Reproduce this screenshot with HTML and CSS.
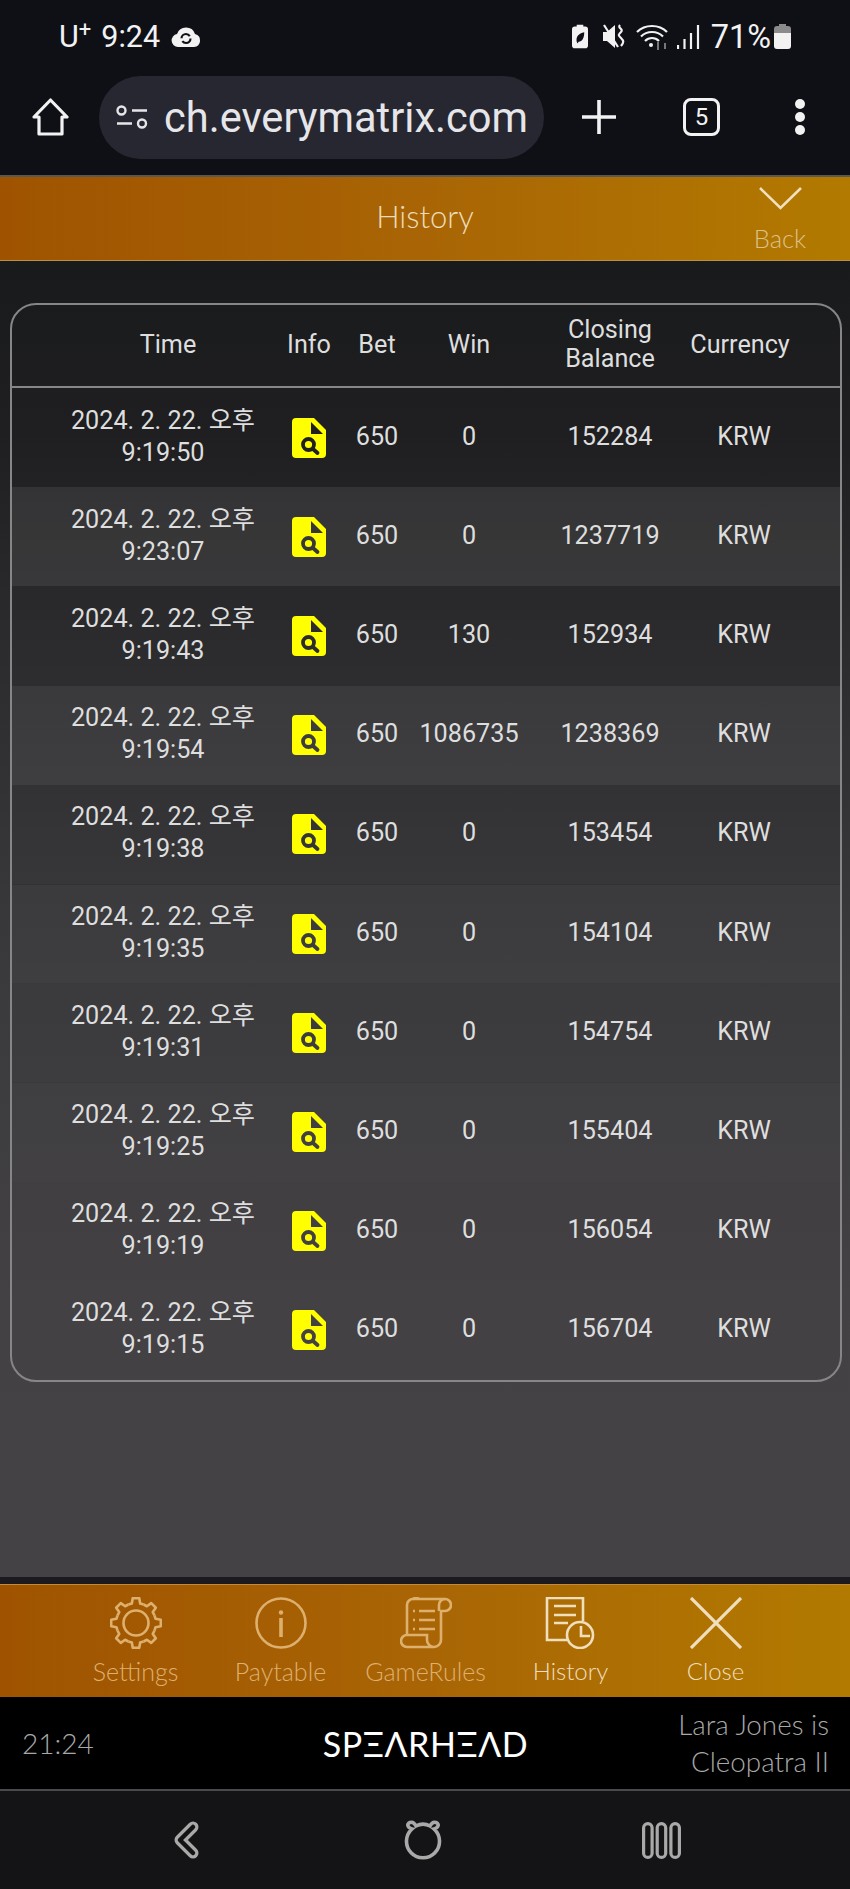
FILE: index.html
```html
<!DOCTYPE html>
<html lang="en">
<head>
    <title>History</title>
    <meta charset="UTF-8">
    <meta name="viewport" content="width=device-width, initial-scale=1.0">
    <link rel="stylesheet" href="styles.css">
</head>

<body>
    <svg class="defs" width="0" height="0">
        <defs>
            <mask id="doc-cut">
                <rect width="34" height="40" fill="#fff"/>
                <path fill="#000" d="M19 4V16H31z"/>
                <circle cx="16.500" cy="26.500" r="5.500" fill="none" stroke="#000" stroke-width="3.800"/>
                <path d="M21 31L25.500 35" stroke="#000" stroke-width="3.800" stroke-linecap="round"/>
            </mask>
            <symbol id="doc" viewBox="0 0 34 40">
                <path fill="#ffff00" mask="url(#doc-cut)" d="M4 0H22L34 12V36a4 4 0 0 1-4 4H4a4 4 0 0 1-4-4V4a4 4 0 0 1 4-4z"/>
            </symbol>
            <path id="tooth" d="M-7.65-18.48L-4.16-19.56-3.26-24.8H3.26L4.16-19.56 7.65-18.48"/>
        </defs>
    </svg>

    <div class="top">
        <div class="status">
            <div class="status-left">
                <span class="carrier">U<sup>+</sup></span>
                <span class="clock">9:24</span>
                <svg class="ico-cloud" viewBox="0 0 30 20">
                    <path fill="#f2f2f2" d="M7 20a6.500 6.500 0 0 1-1-12.900A9.500 9.500 0 0 1 24 7a6.600 6.600 0 0 1-1 13z"/>
                    <circle cx="15" cy="11.500" r="4.500" fill="none" stroke="#0e1016" stroke-width="2.200" stroke-dasharray="11 3"/>
                </svg>
            </div>
            <div class="status-right">
                <svg class="ico-batt" viewBox="0 0 17 25">
                    <path fill="#f2f2f2" d="M5 0h7v2h2a3 3 0 0 1 3 3v17a3 3 0 0 1-3 3H3a3 3 0 0 1-3-3V5a3 3 0 0 1 3-3h2z"/>
                    <path fill="#0e1016" d="M5 18c-1-5 2-9 8-10 0 6-2 10-6 10l-1 2z"/>
                </svg>
                <svg class="ico-mute" viewBox="0 0 24 25">
                    <path fill="#f2f2f2" d="M0 8h4L12 1v23L4 17H0z"/>
                    <path d="M17 1c-3 3 4 4 1 7s-3 3 0 6 3 4 0 8M1 1l14 22" fill="none" stroke="#f2f2f2" stroke-width="2.200"/>
                </svg>
                <svg class="ico-wifi" viewBox="0 0 33 26">
                    <path d="M1 8C9 0 23 0 31 8M5 12.500c6-6 16-6 22 0M9 17c4-4 10-4 14 0" fill="none" stroke="#f2f2f2" stroke-width="2.200"/>
                    <circle cx="15" cy="21" r="2" fill="#f2f2f2"/>
                    <path d="M22 18v8M29 19v6" stroke="#777" stroke-width="2"/>
                </svg>
                <svg class="ico-signal" viewBox="0 0 23 25">
                    <path d="M1 21v4M7.500 15v10M14 9v16M21 1v24" stroke="#f2f2f2" stroke-width="2.200"/>
                </svg>
                <span class="percent">71%</span>
                <svg class="ico-batt2" viewBox="0 0 17 25">
                    <path fill="#8b8b8b" d="M5 0h7v2h2a3 3 0 0 1 3 3v4H0V5a3 3 0 0 1 3-3h2z"/>
                    <path fill="#f2f2f2" d="M0 9h17v13a3 3 0 0 1-3 3H3a3 3 0 0 1-3-3z"/>
                </svg>
            </div>
        </div>

        <div class="browser">
            <svg class="ico-home" viewBox="0 0 37 38">
                <path d="M2 19L18.500 2 35 19h-5v17H7V19z" fill="none" stroke="#f2f2f2" stroke-width="3.200" stroke-linejoin="round"/>
            </svg>
            <div class="url">
                <svg class="ico-params" viewBox="0 0 32 24">
                    <circle cx="5.500" cy="5.500" r="4" fill="none" stroke="#e6e6ea" stroke-width="2.400"/>
                    <circle cx="26" cy="18.500" r="4" fill="none" stroke="#e6e6ea" stroke-width="2.400"/>
                    <path d="M16 5.500h15M1 18.500h15" stroke="#e6e6ea" stroke-width="2.600"/>
                </svg>
                <span>ch.everymatrix.com</span>
            </div>
            <svg class="ico-plus" viewBox="0 0 34 34">
                <path d="M17 0v34M0 17h34" stroke="#f2f2f2" stroke-width="3.600"/>
            </svg>
            <div class="tabs">5</div>
            <div class="dots"><i></i><i></i><i></i></div>
        </div>
    </div>

    <div class="bar title-bar">
        <span></span>
        <div class="title">History</div>
        <div class="back">
            <svg class="ico-chevron" viewBox="0 0 43 23">
                <path d="M1 1l20.500 20L42 1" fill="none" stroke="#f0e0c0" stroke-width="2.500"/>
            </svg>
            <span>Back</span>
        </div>
    </div>

    <div class="content">
        <div class="card">
            <div class="head">
                <div>Time</div><div>Info</div><div>Bet</div><div>Win</div><div>Closing<br>Balance</div><div>Currency</div>
            </div>
            <div class="row">
                <div>2024. 2. 22. 오후 9:19:50</div><svg class="doc"><use href="#doc"/></svg><div>650</div><div>0</div><div>152284</div><div>KRW</div>
            </div>
            <div class="row">
                <div>2024. 2. 22. 오후 9:23:07</div><svg class="doc"><use href="#doc"/></svg><div>650</div><div>0</div><div>1237719</div><div>KRW</div>
            </div>
            <div class="row">
                <div>2024. 2. 22. 오후 9:19:43</div><svg class="doc"><use href="#doc"/></svg><div>650</div><div>130</div><div>152934</div><div>KRW</div>
            </div>
            <div class="row">
                <div>2024. 2. 22. 오후 9:19:54</div><svg class="doc"><use href="#doc"/></svg><div>650</div><div>1086735</div><div>1238369</div><div>KRW</div>
            </div>
            <div class="row">
                <div>2024. 2. 22. 오후 9:19:38</div><svg class="doc"><use href="#doc"/></svg><div>650</div><div>0</div><div>153454</div><div>KRW</div>
            </div>
            <div class="row">
                <div>2024. 2. 22. 오후 9:19:35</div><svg class="doc"><use href="#doc"/></svg><div>650</div><div>0</div><div>154104</div><div>KRW</div>
            </div>
            <div class="row">
                <div>2024. 2. 22. 오후 9:19:31</div><svg class="doc"><use href="#doc"/></svg><div>650</div><div>0</div><div>154754</div><div>KRW</div>
            </div>
            <div class="row">
                <div>2024. 2. 22. 오후 9:19:25</div><svg class="doc"><use href="#doc"/></svg><div>650</div><div>0</div><div>155404</div><div>KRW</div>
            </div>
            <div class="row">
                <div>2024. 2. 22. 오후 9:19:19</div><svg class="doc"><use href="#doc"/></svg><div>650</div><div>0</div><div>156054</div><div>KRW</div>
            </div>
            <div class="row">
                <div>2024. 2. 22. 오후 9:19:15</div><svg class="doc"><use href="#doc"/></svg><div>650</div><div>0</div><div>156704</div><div>KRW</div>
            </div>
        </div>
    </div>

    <div class="strip"></div>

    <div class="bar menu">
        <div class="item">
            <svg viewBox="0 0 52 52">
                <g transform="translate(26 26)" fill="none" stroke="#deb06e" stroke-width="2.600" stroke-linejoin="round">
                    <use href="#tooth"/>
                    <use href="#tooth" transform="rotate(45)"/>
                    <use href="#tooth" transform="rotate(90)"/>
                    <use href="#tooth" transform="rotate(135)"/>
                    <use href="#tooth" transform="rotate(180)"/>
                    <use href="#tooth" transform="rotate(225)"/>
                    <use href="#tooth" transform="rotate(270)"/>
                    <use href="#tooth" transform="rotate(315)"/>
                    <circle r="12.500"/>
                </g>
            </svg>
            <span>Settings</span>
        </div>
        <div class="item">
            <svg viewBox="0 0 52 52">
                <circle cx="26" cy="26" r="24.500" fill="none" stroke="#deb06e" stroke-width="2.600"/>
                <circle cx="26" cy="15.500" r="2.200" fill="#deb06e"/>
                <path d="M26 21v19" stroke="#deb06e" stroke-width="3.600"/>
            </svg>
            <span>Paytable</span>
        </div>
        <div class="item">
            <svg viewBox="0 0 52 52">
                <g fill="none" stroke="#deb06e" stroke-width="2.600">
                    <path d="M7 38V8a6 6 0 0 1 6-6h32a6 6 0 0 1 0 12h-4v29a7 7 0 0 1-7 7H7a5.500 5.500 0 0 1 0-12h20v5a7 7 0 0 0 7 7"/>
                    <path d="M13 2a6 6 0 0 1 6 0M45 2a6 6 0 0 0-6 6v6"/>
                    <path d="M19 14h16M19 23h16M19 32h16"/>
                </g>
                <path d="M13 14h2M13 23h2M13 32h2" stroke="#deb06e" stroke-width="2.600"/>
            </svg>
            <span>GameRules</span>
        </div>
        <div class="item on">
            <svg viewBox="0 0 52 52">
                <g fill="none" stroke="#f0dfbd" stroke-width="2.600">
                    <path d="M22 43H2V1h36v23"/>
                    <path d="M9 9h22M9 18h22M9 26h14"/>
                    <circle cx="35" cy="38" r="13"/>
                    <path d="M36 29v10h9"/>
                </g>
            </svg>
            <span>History</span>
        </div>
        <div class="item on">
            <svg viewBox="0 0 52 52">
                <path d="M1 1l50 50M51 1L1 51" stroke="#f0dfbd" stroke-width="3.200"/>
            </svg>
            <span>Close</span>
        </div>
    </div>

    <div class="footer">
        <div class="time">21:24</div>
        <div class="logo">SPΞΛRHΞΛD</div>
        <div class="promo">Lara Jones is<br>Cleopatra II</div>
    </div>

    <div class="nav">
        <svg class="ico-back" viewBox="0 0 26 38">
            <path d="M20 6L7 19l13 13" fill="none" stroke="#a9a9a9" stroke-width="11" stroke-linecap="round" stroke-linejoin="round"/>
            <path d="M20 6L7 19l13 13" fill="none" stroke="#141416" stroke-width="4.500" stroke-linecap="round" stroke-linejoin="round"/>
        </svg>
        <svg class="ico-bear" viewBox="0 0 38 40">
            <path d="M8 9C4 8 2 4 6 2.500 9 1.500 11 4 12 6a15 15 0 0 1 14 0c1-2 3-4.500 6-3.500 4 1.500 2 5.500-2 6.500a16.500 16.500 0 1 1-22 0z" fill="none" stroke="#a9a9a9" stroke-width="3.600"/>
        </svg>
        <svg class="ico-recent" viewBox="0 0 39 37">
            <g fill="none" stroke="#a9a9a9" stroke-width="3.200">
                <rect x="1.600" y="1.600" width="8.500" height="33.800" rx="4.200"/>
                <rect x="15.200" y="1.600" width="8.500" height="33.800" rx="4.200"/>
                <rect x="28.900" y="1.600" width="8.500" height="33.800" rx="4.200"/>
            </g>
        </svg>
    </div>
</body>
</html>
```

FILE: styles.css
```css
body {
    margin: 0;
    width: 850px;
    height: 1889px;
    display: flex;
    flex-direction: column;
    overflow: hidden;
    background-color: #000;
    font-family: Roboto, "Noto Sans CJK KR", sans-serif;
}

svg {
    display: block;
    flex: none;
}

.defs {
    position: absolute;
}

/* phone + browser chrome */
.top {
    height: 175px;
    flex: none;
    background-color: #0e1016;
    color: #f2f2f2;
}

.status {
    height: 72px;
    padding: 1px 59px 0;
    display: flex;
    justify-content: space-between;
    align-items: center;
    font-size: 30.5px;
    box-sizing: border-box;
}

.status-left,
.status-right {
    display: flex;
    align-items: center;
}

.carrier {
    margin-right: 10px;
}

.carrier sup {
    font-size: 22px;
    line-height: 0;
    vertical-align: 10px;
}

.ico-cloud { width: 30px; height: 20px; margin-left: 11px; }
.ico-batt { width: 16px; height: 25px; }
.ico-mute { width: 24px; height: 25px; margin-left: 15px; }
.ico-wifi { width: 33px; height: 26px; margin-left: 9px; }
.ico-signal { width: 23px; height: 25px; margin-left: 8px; }
.percent { margin-left: 11px; font-size: 32.5px; }
.ico-batt2 { width: 17px; height: 25px; margin-left: 3px; }

.browser {
    height: 103px;
    padding: 5px 0 18px 32px;
    display: flex;
    align-items: center;
    box-sizing: border-box;
}

.ico-home { width: 37px; height: 38px; }

.url {
    width: 445px;
    height: 83px;
    margin-left: 30px;
    padding-left: 17px;
    box-sizing: border-box;
    border-radius: 42px;
    background-color: #262730;
    display: flex;
    align-items: center;
    color: #e6e6ea;
    font-size: 41.6px;
    white-space: nowrap;
}

.ico-params { width: 32px; height: 24px; margin-right: 16px; }
.ico-plus { width: 34px; height: 34px; margin-left: 38px; }

.tabs {
    width: 37px;
    height: 38px;
    margin-left: 67px;
    box-sizing: border-box;
    border: 3px solid #f2f2f2;
    border-radius: 8px;
    display: flex;
    align-items: center;
    justify-content: center;
    font-size: 24px;
}

.dots {
    margin-left: 75px;
    display: flex;
    flex-direction: column;
    gap: 3px;
}

.dots i {
    display: block;
    width: 10px;
    height: 10px;
    border-radius: 50%;
    background-color: #f2f2f2;
}

/* orange bars */
.bar {
    background: linear-gradient(90deg, #9f5300, #a96505 50%, #b27a00);
    font-family: Lato, sans-serif;
    font-weight: 300;
    box-sizing: border-box;
    flex: none;
}

.title-bar {
    height: 86px;
    display: grid;
    grid-template-columns: 1fr auto 1fr;
    align-items: center;
    border-top: 2px solid #5b5650;
    border-bottom: 1px solid #b98f4a;
}

.title {
    color: #ecdcb8;
    font-size: 31px;
    padding-bottom: 5px;
}

.back {
    justify-self: end;
    width: 52px;
    margin-right: 44px;
    display: flex;
    flex-direction: column;
    align-items: center;
    color: #dcc08a;
    font-size: 25.5px;
    line-height: 28px;
}

.ico-chevron { width: 43px; height: 23px; margin-bottom: 9px; margin-top: -3px; }

.back span {
    position: relative;
    top: 5px;
}

/* table */
.content {
    flex: 1;
    padding: 42px 8px 0 10px;
    background: linear-gradient(180deg, #191a1c, #1f1f21 13%, #2b2b2d 28%, #353437 44%, #3b3a3d 56%, #434144 79%, #454246);
}

.card {
    border: 2px solid #868686;
    border-radius: 26px;
    overflow: hidden;
    color: #dedede;
    font-size: 25.2px;
    text-align: center;
}

.head,
.row {
    display: grid;
    align-items: center;
    justify-items: center;
    box-sizing: border-box;
}

.head {
    height: 83px;
    padding: 0 58px 3px 44px;
    grid-template-columns: 224px 58px 78px 106px 176px 84px;
    line-height: 29px;
    border-bottom: 2px solid #868686;
}

.row {
    height: 99.2px;
    padding: 0 50px 2px 34px;
    grid-template-columns: 234px 58px 78px 106px 176px 92px;
    line-height: 32px;
}

/* stripes fade out toward the bottom */
.row:nth-child(3) { background-color: rgba(255, 255, 255, 0.08); }
.row:nth-child(5) { background-color: rgba(255, 255, 255, 0.058); }
.row:nth-child(7) { background-color: rgba(255, 255, 255, 0.025); border-top: 1px solid rgba(0, 0, 0, 0.15); }
.row:nth-child(9) { background-color: rgba(255, 255, 255, 0.012); border-top: 1px solid rgba(0, 0, 0, 0.08); }

.doc {
    width: 34px;
    height: 40px;
    position: relative;
    top: 1px;
}

/* bottom */
.strip {
    height: 7px;
    flex: none;
    background-color: #1c1a1f;
}

.menu {
    height: 113px;
    padding: 12px 0 0 63px;
    display: flex;
    border-top: 1px solid #c08c3c;
}

.item {
    width: 145px;
    display: flex;
    flex-direction: column;
    align-items: center;
    color: #deb06e;
    font-size: 25px;
}

.item svg {
    width: 52px;
    height: 52px;
    margin-bottom: 7px;
}

.item.on {
    color: #f0dfbd;
    font-size: 24px;
}

.footer {
    height: 94px;
    flex: none;
    padding: 0 21px 0 22px;
    display: grid;
    grid-template-columns: 1fr auto 1fr;
    align-items: center;
    background-color: #000;
    border-bottom: 2px solid #4a4a4c;
    box-sizing: border-box;
    font-family: Lato, sans-serif;
    font-weight: 300;
    color: #a8a8a8;
}

.time {
    font-size: 28px;
}

.logo {
    color: #fff;
    font-size: 34px;
    font-weight: 400;
    letter-spacing: 0.6px;
}

.promo {
    justify-self: end;
    text-align: right;
    font-size: 27.8px;
    line-height: 37px;
}

.nav {
    height: 98px;
    flex: none;
    background-color: #141416;
    display: flex;
    align-items: center;
    padding-left: 173px;
    box-sizing: border-box;
}

.ico-back { width: 26px; height: 38px; }
.ico-bear { width: 38px; height: 40px; margin-left: 205px; }
.ico-recent { width: 39px; height: 37px; margin-left: 200px; }
```
